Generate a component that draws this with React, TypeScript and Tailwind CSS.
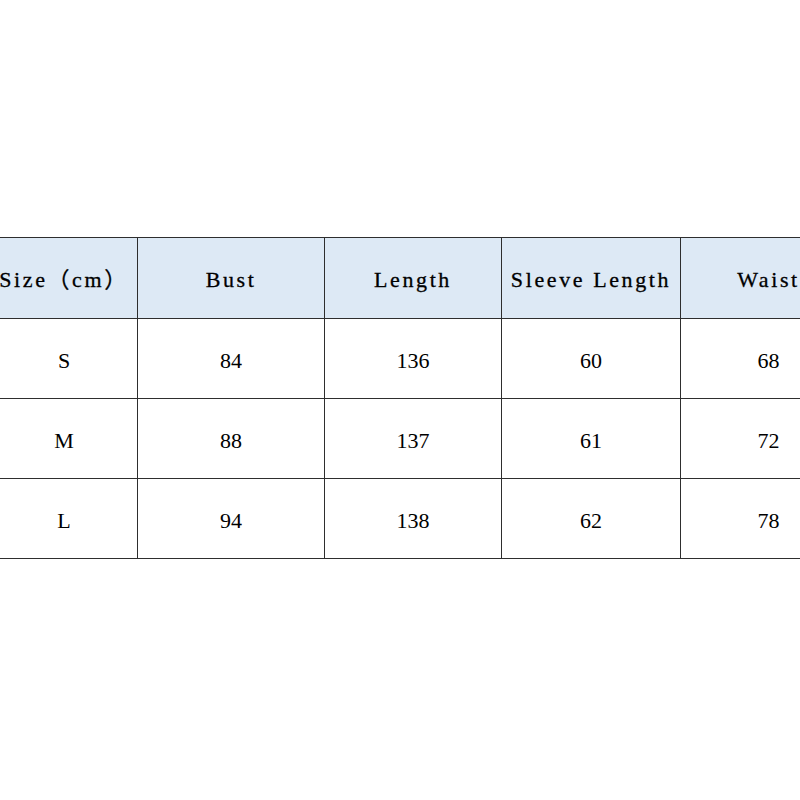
const headers = ["Size（cm）", "Bust", "Length", "Sleeve Length", "Waist"];

const rows = [
  ["S", "84", "136", "60", "68"],
  ["M", "88", "137", "61", "72"],
  ["L", "94", "138", "62", "78"],
];

const widths = ["w-[147px]", "w-[187px]", "w-[177px]", "w-[179px]", "w-[176px]"];

export default function App() {
  return (
    <div className="h-[800px] w-[800px] overflow-hidden bg-white pt-[237px]">
      <table className="-ml-[10px] w-[866px] min-w-[866px] table-fixed border-collapse">
        <colgroup>
          {widths.map((w, i) => (
            <col key={i} className={w} />
          ))}
        </colgroup>
        <thead>
          <tr className="h-[81px] bg-[#dde9f5]">
            {headers.map((h) => (
              <th
                key={h}
                className="whitespace-nowrap border border-[#2e2e2e] p-0 pt-[2px] text-center text-[22px] font-normal tracking-[2.6px] text-black [-webkit-text-stroke:0.3px_black]"
                style={{ fontFamily: '"Liberation Serif", "Noto Sans CJK SC", serif' }}
              >
                {h}
              </th>
            ))}
          </tr>
        </thead>
        <tbody>
          {rows.map((r) => (
            <tr key={r[0]} className="h-[80px]">
              {r.map((c, i) => (
                <td
                  key={i}
                  className="border border-[#2e2e2e] p-0 pt-[3px] text-center text-[22px] text-black"
                  style={{ fontFamily: '"Liberation Serif", serif' }}
                >
                  {c}
                </td>
              ))}
            </tr>
          ))}
        </tbody>
      </table>
    </div>
  );
}
